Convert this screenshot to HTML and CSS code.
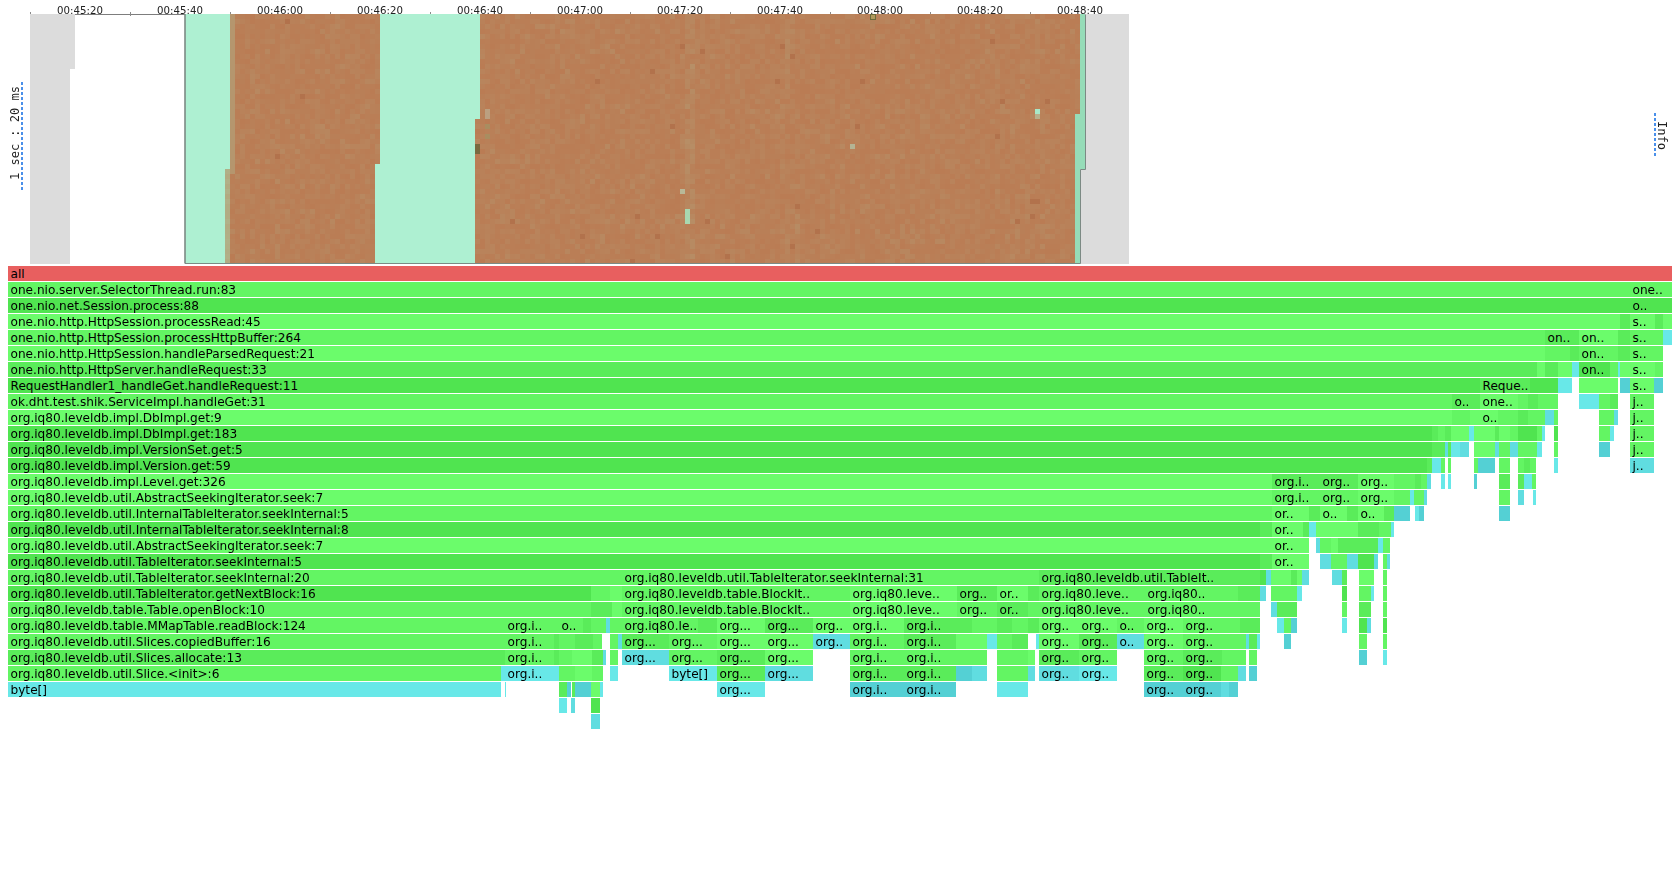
FILE: index.html
```html
<!DOCTYPE html>
<html lang="en">
<head>
<meta charset="utf-8">
<title>Flame graph</title>
<link rel="stylesheet" href="styles.css">
</head>
<body>
<header class="top">
  <div class="side side-left"><span class="side-label">1 sec : 20 ms</span></div>
  <div class="chart">
    <div class="axis" id="axis"></div>
    <canvas class="heat" id="heat" width="1100" height="250"></canvas>
  </div>
  <div class="side side-right"><span class="side-label side-info">Info</span></div>
</header>
<main class="flame" id="flame"></main>
<script src="app.js"></script>
</body>
</html>
```
FILE: styles.css
```css
html, body {
  margin: 0;
  padding: 0;
  background: #fff;
  overflow: hidden;
}
body {
  width: 1680px;
  height: 885px;
  font-family: "DejaVu Sans", Verdana, sans-serif;
  color: #000;
}
.top {
  display: flex;
  height: 266px;
}
.side {
  display: flex;
  justify-content: flex-end;
  align-items: flex-start;
  box-sizing: border-box;
}
.side-left {
  width: 30px;
  padding-top: 81px;
  padding-right: 7px;
}
.side-right {
  width: 550px;
  padding-top: 113px;
  padding-right: 12px;
}
.side-label {
  font-family: "DejaVu Sans Mono", "Liberation Mono", monospace;
  font-size: 12px;
  line-height: 12px;
  white-space: nowrap;
  writing-mode: vertical-rl;
  transform: rotate(180deg);
  padding: 10px 0 7px 2px;
  height: 92px;
  color: #222;
  background: repeating-linear-gradient(to bottom, #4a90ea 0 3px, transparent 3px 5px) left top / 2px 100% no-repeat;
  filter: blur(0.3px);
}
.side-info {
  transform: none;
  height: 28px;
  padding: 8px 0 8px 2px;
}
.chart {
  width: 1100px;
  display: flex;
  flex-direction: column;
}
.axis {
  display: flex;
  height: 14px;
  width: 1099px;
  border-bottom: 1px solid #7d7d7d;
  margin-bottom: -1px;
}
.tick {
  position: relative;
  width: 100px;
  flex: none;
  text-align: center;
  font-size: 10.2px;
  line-height: 12px;
  padding-top: 5px;
  height: 9px;
  color: #222;
  filter: blur(0.25px);
}
.tick::before {
  content: "";
  position: absolute;
  left: 0;
  top: 12px;
  width: 1px;
  height: 4px;
  background: #8a8a8a;
}
.heat {
  display: block;
  width: 1100px;
  height: 250px;
  filter: blur(0.5px);
}
.flame {
  display: flex;
  flex-direction: column;
  gap: 1px;
  margin: 0 8px;
  filter: blur(0.45px);
}
.row {
  display: flex;
  height: 15px;
}
.frame {
  flex: none;
  height: 15px;
  box-sizing: border-box;
  overflow: hidden;
  white-space: nowrap;
  font-size: 12.13px;
  line-height: 17px;
  color: #000;
}
.labelled {
  padding-left: 2.5px;
}
.s-a { background: #6bfc6b; }
.s-b { background: #63f563; }
.s-c { background: #5aec5a; }
.s-d { background: #50e450; }
.s-x { background: #68e8e8; }
.s-y { background: #60dde0; }
.s-z { background: #54d0d4; }
.s-r { background: #e85f5f; }
```
FILE: app.js
```js
var axis = document.getElementById('axis');
var labels = ['00:45:20','00:45:40','00:46:00','00:46:20','00:46:40','00:47:00','00:47:20','00:47:40','00:48:00','00:48:20','00:48:40'];
labels.forEach(function (t) {
  var d = document.createElement('div');
  d.className = 'tick';
  d.textContent = t;
  axis.appendChild(d);
});

/* heat map */
var ctx = document.getElementById('heat').getContext('2d');
var seed = 12345;
function rnd() { seed = (seed * 16807) % 2147483647; return seed / 2147483647; }
var OX = 30, OY = 14;
function fill(c, x0, y0, x1, y1) { ctx.fillStyle = c; ctx.fillRect(x0 - OX, y0 - OY, x1 - x0, y1 - y0); }
fill('#dcdcdc', 30, 14, 75, 69);
fill('#dcdcdc', 30, 69, 70, 264);
fill('#dcdcdc', 1085, 14, 1129, 169);
fill('#dcdcdc', 1080, 169, 1129, 264);
fill('#aef0d2', 185, 14, 1085, 264);
fill('#96dcb8', 1079, 14, 1085, 264);
fill('#dcdcdc', 1080, 169, 1085, 264);
fill('#96dcb8', 1074, 114, 1080, 264);

function brown(x, y) {
  var l1 = y >= 169 ? 225 : 230, r1 = y >= 164 ? 375 : 380;
  var l2 = y >= 119 ? 475 : 480, r2 = y >= 114 ? 1075 : 1080;
  return (x >= l1 && x < r1) || (x >= l2 && x < r2);
}
var spots = {
  '1035,109': '#a8e8c8', '1035,114': '#b8b08c', '685,209': '#a8d8b0', '685,214': '#a8d8b0', '685,219': '#a8d8b0',
  '680,189': '#b8b898', '850,144': '#b4b494', '475,144': '#7a6a40', '475,149': '#7a6a40',
  '485,109': '#bba080', '485,114': '#bba080', '485,124': '#a98d60', '485,134': '#a98d60', '870,14': '#b09a5c', '870,19': '#b5845c'
};
for (var x = 225; x < 1080; x += 5) {
  for (var y = 14; y < 264; y += 5) {
    if (!brown(x, y)) continue;
    var r = rnd();
    var mix;
    if (r < 0.55) mix = rnd() * 0.05;
    else if (r < 0.92) mix = 0.05 + rnd() * 0.07;
    else mix = 0.12 + rnd() * 0.06;
    if (x === 685 || x === 690) mix += rnd() * 0.16;
    if ((x === 785 || x === 790) && y < 60) mix += rnd() * 0.14;
    if ((x === 785 || x === 795) && y > 200) mix += rnd() * 0.1;
    if (x === 230 && y < 170) mix = 0.4;
    if (x === 225) mix = 0.7 + rnd() * 0.1;
    var cr = Math.round(186 + (174 - 186) * mix);
    var cg = Math.round(124 + (190 - 124) * mix);
    var cb = Math.round(84 + (150 - 84) * mix);
    if (r > 0.997) { cr = 178; cg = 114; cb = 76; }
    fill(spots[x + ',' + y] || 'rgb(' + cr + ',' + cg + ',' + cb + ')', x, y, x + 5, y + 5);
  }
}
ctx.strokeStyle = '#7c8a84';
ctx.lineWidth = 1;
ctx.beginPath();
ctx.moveTo(1085.5 - OX, 0.5);
ctx.lineTo(1085.5 - OX, 169.5 - OY);
ctx.lineTo(1080.5 - OX, 169.5 - OY);
ctx.lineTo(1080.5 - OX, 263.5 - OY);
ctx.lineTo(185 - OX, 263.5 - OY);
ctx.stroke();
ctx.lineWidth = 1.6;
ctx.beginPath();
ctx.moveTo(185 - OX, 263.5 - OY);
ctx.lineTo(185 - OX, 0);
ctx.stroke();
ctx.lineWidth = 1;
ctx.strokeStyle = '#6b6b3a';
ctx.strokeRect(870.5 - OX, 14.5 - OY, 5, 5);

/* flame graph: [x0, x1, shade, label] in page pixels */
var rows = [
  [[8,1672,'r','all']],
  [[8,1630,'b','one.nio.server.SelectorThread.run:83'],[1630,1672,'b','one..']],
  [[8,1630,'d','one.nio.net.Session.process:88'],[1630,1672,'d','o..']],
  [[8,1620,'a','one.nio.http.HttpSession.processRead:45'],[1620,1630,'c'],[1630,1655,'a','s..'],[1655,1663,'c'],[1663,1672,'a']],
  [[8,1545,'b','one.nio.http.HttpSession.processHttpBuffer:264'],[1545,1579,'c','on..'],[1579,1618,'a','on..'],[1618,1630,'c'],[1630,1663,'b','s..'],[1663,1672,'x']],
  [[8,1545,'a','one.nio.http.HttpSession.handleParsedRequest:21'],[1545,1570,'b'],[1570,1579,'c'],[1579,1618,'b','on..'],[1618,1630,'c'],[1630,1663,'b','s..']],
  [[8,1537,'c','one.nio.http.HttpServer.handleRequest:33'],[1537,1545,'a'],[1545,1558,'c'],[1558,1572,'a'],[1572,1579,'x'],[1579,1610,'d','on..'],[1610,1618,'b'],[1618,1620,'x'],[1620,1630,'a'],[1630,1655,'a','s..'],[1655,1663,'b']],
  [[8,1480,'d','RequestHandler1_handleGet.handleRequest:11'],[1480,1530,'c','Reque..'],[1530,1558,'d'],[1558,1572,'x'],[1579,1618,'a'],[1620,1630,'z'],[1630,1654,'a','s..'],[1654,1663,'z']],
  [[8,1452,'b','ok.dht.test.shik.ServiceImpl.handleGet:31'],[1452,1480,'c','o..'],[1480,1518,'a','one..'],[1518,1528,'b'],[1528,1538,'c'],[1538,1558,'b'],[1579,1599,'x'],[1599,1610,'b'],[1610,1618,'c'],[1630,1654,'b','j..']],
  [[8,1452,'a','org.iq80.leveldb.impl.DbImpl.get:9'],[1452,1470,'b'],[1470,1480,'a'],[1480,1498,'a','o..'],[1498,1518,'b'],[1518,1528,'c'],[1528,1545,'b'],[1545,1554,'y'],[1554,1558,'b'],[1599,1614,'b'],[1614,1618,'y'],[1630,1654,'b','j..']],
  [[8,1432,'d','org.iq80.leveldb.impl.DbImpl.get:183'],[1432,1438,'c'],[1438,1445,'b'],[1445,1451,'c'],[1451,1469,'a'],[1469,1474,'x'],[1474,1495,'a'],[1495,1499,'c'],[1499,1510,'a'],[1510,1518,'b'],[1518,1537,'d'],[1537,1542,'b'],[1542,1545,'x'],[1554,1558,'d'],[1599,1610,'b'],[1610,1614,'x'],[1630,1654,'b','j..']],
  [[8,1432,'d','org.iq80.leveldb.impl.VersionSet.get:5'],[1432,1445,'c'],[1445,1448,'y'],[1448,1451,'c'],[1451,1460,'x'],[1460,1469,'y'],[1474,1495,'a'],[1495,1499,'y'],[1499,1510,'b'],[1510,1518,'y'],[1518,1537,'b'],[1537,1542,'x'],[1554,1558,'b'],[1599,1610,'z'],[1630,1654,'b','j..']],
  [[8,1427,'d','org.iq80.leveldb.impl.Version.get:59'],[1427,1432,'c'],[1432,1441,'x'],[1441,1445,'b'],[1448,1451,'b'],[1474,1478,'b'],[1478,1495,'z'],[1499,1510,'b'],[1518,1524,'b'],[1524,1530,'c'],[1530,1536,'b'],[1554,1558,'x'],[1630,1654,'y','j..']],
  [[8,1272,'a','org.iq80.leveldb.impl.Level.get:326'],[1272,1320,'c','org.i..'],[1320,1358,'c','org..'],[1358,1394,'a','org..'],[1394,1415,'b'],[1415,1421,'c'],[1421,1427,'b'],[1427,1431,'y'],[1441,1445,'x'],[1448,1451,'x'],[1474,1477,'z'],[1499,1510,'c'],[1518,1524,'c'],[1524,1532,'x'],[1532,1536,'b']],
  [[8,1272,'a','org.iq80.leveldb.util.AbstractSeekingIterator.seek:7'],[1272,1320,'b','org.i..'],[1320,1358,'b','org..'],[1358,1394,'a','org..'],[1394,1410,'b'],[1410,1414,'x'],[1414,1424,'b'],[1424,1427,'y'],[1499,1510,'b'],[1518,1524,'y'],[1533,1536,'x']],
  [[8,1272,'b','org.iq80.leveldb.util.InternalTableIterator.seekInternal:5'],[1272,1309,'a','or..'],[1309,1320,'c'],[1320,1347,'a','o..'],[1347,1358,'c'],[1358,1384,'a','o..'],[1384,1394,'c'],[1394,1410,'z'],[1415,1419,'x'],[1419,1424,'z'],[1499,1510,'z']],
  [[8,1260,'d','org.iq80.leveldb.util.InternalTableIterator.seekInternal:8'],[1260,1272,'c'],[1272,1303,'a','or..'],[1303,1309,'c'],[1309,1316,'x'],[1316,1337,'a'],[1337,1358,'a'],[1358,1379,'c'],[1379,1391,'b'],[1391,1394,'x']],
  [[8,1272,'a','org.iq80.leveldb.util.AbstractSeekingIterator.seek:7'],[1272,1309,'a','or..'],[1316,1320,'y'],[1320,1331,'b'],[1331,1338,'a'],[1338,1358,'c'],[1358,1378,'c'],[1378,1383,'x'],[1383,1390,'b']],
  [[8,1260,'d','org.iq80.leveldb.util.TableIterator.seekInternal:5'],[1260,1272,'c'],[1272,1309,'a','or..'],[1320,1331,'y'],[1331,1347,'b'],[1347,1358,'y'],[1358,1374,'d'],[1374,1378,'y'],[1383,1387,'b'],[1387,1390,'y']],
  [[8,622,'b','org.iq80.leveldb.util.TableIterator.seekInternal:20'],[622,1039,'b','org.iq80.leveldb.util.TableIterator.seekInternal:31'],[1039,1260,'c','org.iq80.leveldb.util.TableIt..'],[1260,1266,'d'],[1266,1271,'y'],[1271,1291,'a'],[1291,1297,'c'],[1297,1302,'a'],[1302,1309,'y'],[1332,1342,'y'],[1342,1347,'c'],[1359,1374,'a'],[1383,1387,'b']],
  [[8,591,'d','org.iq80.leveldb.util.TableIterator.getNextBlock:16'],[591,610,'b'],[610,622,'a'],[622,850,'b','org.iq80.leveldb.table.BlockIt..'],[850,957,'a','org.iq80.leve..'],[957,997,'c','org..'],[997,1028,'a','or..'],[1028,1039,'c'],[1039,1145,'b','org.iq80.leve..'],[1145,1238,'b','org.iq80..'],[1238,1260,'c'],[1260,1266,'y'],[1271,1297,'b'],[1297,1302,'x'],[1342,1347,'d'],[1359,1371,'b'],[1371,1374,'x'],[1383,1387,'b']],
  [[8,591,'b','org.iq80.leveldb.table.Table.openBlock:10'],[591,612,'c'],[612,622,'a'],[622,850,'b','org.iq80.leveldb.table.BlockIt..'],[850,957,'a','org.iq80.leve..'],[957,997,'b','org..'],[997,1028,'c','or..'],[1028,1039,'b'],[1039,1145,'b','org.iq80.leve..'],[1145,1260,'b','org.iq80..'],[1271,1277,'y'],[1277,1297,'c'],[1342,1347,'b'],[1359,1371,'c'],[1383,1387,'b']],
  [[8,505,'b','org.iq80.leveldb.table.MMapTable.readBlock:124'],[505,559,'b','org.i..'],[559,583,'b','o..'],[583,591,'c'],[591,606,'b'],[606,610,'y'],[610,622,'b'],[622,698,'b','org.iq80.le..'],[698,717,'c'],[717,765,'a','org...'],[765,813,'c','org...'],[813,850,'a','org..'],[850,904,'a','org.i..'],[904,956,'c','org.i..'],[956,972,'c'],[972,997,'b'],[997,1012,'c'],[1012,1028,'b'],[1028,1039,'c'],[1039,1079,'a','org..'],[1079,1117,'a','org..'],[1117,1144,'b','o..'],[1144,1183,'a','org..'],[1183,1222,'b','org..'],[1222,1240,'b'],[1240,1260,'c'],[1277,1284,'x'],[1284,1291,'b'],[1291,1297,'z'],[1342,1347,'x'],[1359,1367,'d'],[1367,1371,'y'],[1383,1387,'d']],
  [[8,505,'b','org.iq80.leveldb.util.Slices.copiedBuffer:16'],[505,554,'b','org.i..'],[554,559,'c'],[559,575,'b'],[575,593,'c'],[593,602,'b'],[610,618,'b'],[618,622,'y'],[622,669,'c','org...'],[669,717,'b','org...'],[717,765,'a','org...'],[765,813,'a','org...'],[813,850,'y','org..'],[850,904,'b','org.i..'],[904,956,'c','org.i..'],[956,972,'a'],[972,987,'a'],[987,997,'x'],[997,1012,'b'],[1012,1028,'c'],[1036,1039,'x'],[1039,1079,'a','org..'],[1079,1117,'c','org..'],[1117,1144,'y','o..'],[1144,1183,'a','org..'],[1183,1222,'b','org..'],[1222,1246,'b'],[1246,1249,'y'],[1249,1257,'c'],[1257,1260,'x'],[1284,1291,'z'],[1359,1367,'b'],[1383,1387,'b']],
  [[8,505,'c','org.iq80.leveldb.util.Slices.allocate:13'],[505,554,'b','org.i..'],[554,559,'c'],[559,572,'b'],[572,592,'a'],[592,603,'c'],[603,606,'y'],[610,618,'b'],[622,669,'y','org...'],[669,717,'b','org...'],[717,765,'c','org...'],[765,813,'a','org...'],[850,904,'b','org.i..'],[904,956,'b','org.i..'],[956,972,'b'],[972,987,'b'],[997,1028,'b'],[1028,1035,'a'],[1039,1079,'c','org..'],[1079,1117,'b','org..'],[1144,1183,'b','org..'],[1183,1222,'c','org..'],[1222,1246,'b'],[1249,1257,'b'],[1359,1367,'z'],[1383,1387,'x']],
  [[8,501,'b','org.iq80.leveldb.util.Slice.<init>:6'],[501,505,'x'],[505,559,'x','org.i..'],[559,575,'b'],[575,592,'a'],[592,603,'b'],[610,618,'x'],[669,717,'x','byte[]'],[717,765,'c','org...'],[765,813,'y','org...'],[850,904,'c','org.i..'],[904,956,'c','org.i..'],[956,972,'z'],[972,987,'y'],[997,1028,'b'],[1028,1035,'y'],[1039,1079,'y','org..'],[1079,1117,'x','org..'],[1144,1183,'c','org..'],[1183,1221,'d','org..'],[1221,1238,'b'],[1238,1246,'y'],[1249,1257,'z']],
  [[8,501,'x','byte[]'],[505,506,'x'],[559,567,'c'],[567,571,'z'],[572,575,'c'],[575,591,'z'],[591,600,'a'],[600,603,'x'],[717,765,'x','org...'],[850,904,'z','org.i..'],[904,956,'z','org.i..'],[997,1028,'x'],[1144,1183,'z','org..'],[1183,1221,'z','org..'],[1221,1229,'y'],[1229,1238,'z']],
  [[559,567,'x'],[571,575,'y'],[591,600,'d']],
  [[591,600,'y']]
];
var flame = document.getElementById('flame');
rows.forEach(function (segs) {
  var row = document.createElement('div');
  row.className = 'row';
  var prev = 8;
  segs.forEach(function (s) {
    var f = document.createElement('div');
    f.className = 'frame s-' + s[2] + (s[3] ? ' labelled' : '');
    f.style.width = (s[1] - s[0]) + 'px';
    if (s[0] > prev) f.style.marginLeft = (s[0] - prev) + 'px';
    if (s[3]) f.textContent = s[3];
    row.appendChild(f);
    prev = s[1];
  });
  flame.appendChild(row);
});
```
